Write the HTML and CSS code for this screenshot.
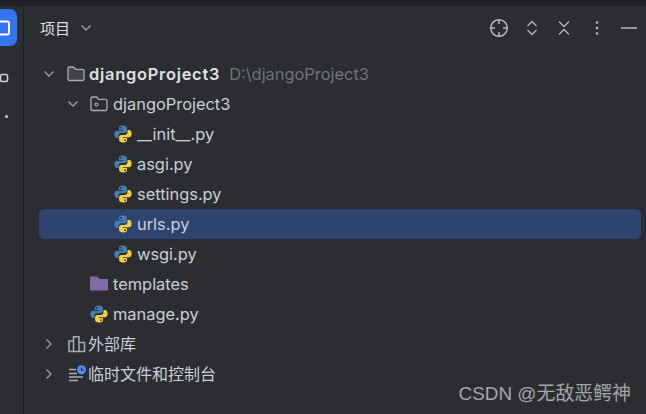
FILE: index.html
```html
<!DOCTYPE html>
<html lang="zh">
<head>
<meta charset="utf-8">
<title>项目</title>
<link rel="stylesheet" href="styles.css">
</head>
<body>
<svg class="defs" width="0" height="0" aria-hidden="true">
  <symbol id="py" viewBox="0 0 18 18">
    <path fill="#3f7fb5" d="M8.8 .5C5.6 .5 5 1.800 5 3v2h4.200v.8H3C1.300 5.800 .4 7.200 .4 9.200s.9 3.700 2.500 3.700H4.500v-2.200c0-1.500 1.300-2.700 2.800-2.700h3.400c1.200 0 2.200-1 2.200-2.200V3C12.900 1.500 11.500 .5 8.800 .5z"/>
    <path fill="#f7cf3d" d="M9.200 17.500c3.200 0 3.800-1.300 3.800-2.500v-2H8.800v-.8H15c1.700 0 2.600-1.400 2.600-3.400s-.9-3.700-2.500-3.700H13.500v2.200c0 1.500-1.300 2.700-2.800 2.700H7.300c-1.200 0-2.200 1-2.200 2.200V15c0 1.500 1.400 2.500 4.100 2.500z"/>
    <circle cx="7" cy="2.800" r=".9" fill="#2b2d30"/>
    <circle cx="11" cy="15.200" r=".9" fill="#2b2d30"/>
  </symbol>
  <symbol id="chev-down" viewBox="0 0 12 12">
    <path d="M1.500 3.500 6 8l4.500-4.500" fill="none" stroke="currentColor" stroke-width="1.300"/>
  </symbol>
  <symbol id="chev-right" viewBox="0 0 12 12">
    <path d="M3.500 1.500 8 6l-4.500 4.500" fill="none" stroke="currentColor" stroke-width="1.300"/>
  </symbol>
</svg>

<div class="topline"></div>
<div class="window">
  <aside class="rail">
    <div class="rail-active"><svg width="18" height="18" viewBox="0 0 18 18"><rect x="2" y="2.500" width="14" height="13" rx="2" fill="none" stroke="#fff" stroke-width="2"/></svg></div>
    <div class="rail-icon"><svg width="10" height="10" viewBox="0 0 10 10"><rect x="1.500" y="1.500" width="7" height="7" rx="1.500" fill="none" stroke="#ced0d6" stroke-width="1.600"/></svg></div>
    <div class="rail-dot"></div>
  </aside>

  <main class="panel">
    <header class="head">
      <div class="title"><span>项目</span><svg class="title-chev" width="12" height="12"><use href="#chev-down"/></svg></div>
      <div class="tools">
        <svg width="20" height="20" viewBox="0 0 20 20" fill="none" stroke="#b4b8bf" stroke-width="1.500"><circle cx="10" cy="10" r="8.300"/><path d="M10 2v4M10 14v4M2 10h4M14 10h4"/></svg>
        <svg class="tool-shift" width="16" height="16" viewBox="0 0 16 16" fill="none" stroke="#b4b8bf" stroke-width="1.300"><path d="M3.500 6 8 1.500 12.500 6M3.500 10 8 14.500 12.500 10"/></svg>
        <svg class="tool-shift" width="16" height="16" viewBox="0 0 16 16" fill="none" stroke="#b4b8bf" stroke-width="1.300"><path d="M3 1.500 8 6.500 13 1.500M3 14.500 8 9.500 13 14.500"/></svg>
        <svg width="16" height="16" viewBox="0 0 16 16" fill="#b4b8bf"><circle cx="8" cy="2.500" r="1.300"/><circle cx="8" cy="8" r="1.300"/><circle cx="8" cy="13.500" r="1.300"/></svg>
        <svg width="16" height="16" viewBox="0 0 16 16"><path d="M0 8h16" stroke="#b4b8bf" stroke-width="1.500"/></svg>
      </div>
    </header>

    <ul class="tree">
      <li class="row lvl0">
        <svg class="arrow" width="12" height="12"><use href="#chev-down"/></svg>
        <svg class="ico" width="18" height="18" viewBox="0 0 18 18"><path d="M1 3.500a1.500 1.500 0 0 1 1.500-1.500h4l2 2.300h7a1.500 1.500 0 0 1 1.500 1.500v8.200a1.500 1.500 0 0 1-1.500 1.500h-13A1.500 1.500 0 0 1 1 14z" fill="#43454a" stroke="#a8adb5" stroke-width="1.300"/></svg>
        <span class="name strong">djangoProject3</span><span class="path">D:\djangoProject3</span>
      </li>
      <li class="row lvl1">
        <svg class="arrow" width="12" height="12"><use href="#chev-down"/></svg>
        <svg class="ico" width="18" height="18" viewBox="0 0 18 18"><path d="M1 3.500a1.500 1.500 0 0 1 1.500-1.500h4l2 2.300h7a1.500 1.500 0 0 1 1.500 1.500v8.200a1.500 1.500 0 0 1-1.500 1.500h-13A1.500 1.500 0 0 1 1 14z" fill="none" stroke="#a8adb5" stroke-width="1.300"/><circle cx="6.500" cy="9.500" r="1.500" fill="none" stroke="#a8adb5" stroke-width="1.200"/></svg>
        <span class="name">djangoProject3</span>
      </li>
      <li class="row lvl2"><svg class="ico" width="18" height="18"><use href="#py"/></svg><span class="name">__init__.py</span></li>
      <li class="row lvl2"><svg class="ico" width="18" height="18"><use href="#py"/></svg><span class="name">asgi.py</span></li>
      <li class="row lvl2"><svg class="ico" width="18" height="18"><use href="#py"/></svg><span class="name">settings.py</span></li>
      <li class="row lvl2 selected"><svg class="ico" width="18" height="18"><use href="#py"/></svg><span class="name">urls.py</span></li>
      <li class="row lvl2"><svg class="ico" width="18" height="18"><use href="#py"/></svg><span class="name">wsgi.py</span></li>
      <li class="row lvl1b">
        <svg class="ico" width="18" height="18" viewBox="0 0 18 18"><path d="M0 1.500h7l2.500 2.500H18v11.500H0z" fill="#8469a8"/></svg>
        <span class="name">templates</span>
      </li>
      <li class="row lvl1b"><svg class="ico" width="18" height="18"><use href="#py"/></svg><span class="name">manage.py</span></li>
      <li class="row lvl0b">
        <svg class="arrow" width="12" height="12"><use href="#chev-right"/></svg>
        <svg class="ico" width="18" height="18" viewBox="0 0 18 18" fill="none" stroke="#a8adb5" stroke-width="1.500"><path d="M1 16.500V6h4.500v10.500zM5.500 16.500V1.800h5.500v14.700zM11 16.500V7.500h5.500v9z"/></svg>
        <span class="name cjk">外部库</span>
      </li>
      <li class="row lvl0b">
        <svg class="arrow" width="12" height="12"><use href="#chev-right"/></svg>
        <svg class="ico" width="18" height="18" viewBox="0 0 18 18"><path d="M1 4.500h7M1 8.500h8M1 12h14M1 15.500h9" stroke="#a8adb5" stroke-width="1.400"/><circle cx="13.500" cy="4.800" r="4.500" fill="#548af7"/><path d="M13.500 2.400v2.800h2.200" fill="none" stroke="#1e1f22" stroke-width="1"/></svg>
        <span class="name cjk">临时文件和控制台</span>
      </li>
    </ul>
  </main>
</div>
<div class="watermark">CSDN @无敌恶鳄神</div>
</body>
</html>
```

FILE: styles.css
```css
* { box-sizing: border-box; }
html, body { margin: 0; height: 100%; }
body {
  width: 646px;
  height: 414px;
  overflow: hidden;
  background: #2b2d30;
  color: #dfe1e5;
  font-family: Inter, "Noto Sans CJK SC", sans-serif;
  font-size: 16.400px;
  display: flex;
  flex-direction: column;
  position: relative;
}
.defs { position: absolute; }
.topline { height: 6px; background: #1e1f22; flex: none; }
.window { flex: 1; display: flex; min-height: 0; }
.rail {
  width: 24px;
  flex: none;
  border-right: 1px solid #1e1f22;
  display: flex;
  flex-direction: column;
  align-items: flex-end;
  padding-top: 3px;
}
.rail-active {
  width: 23px;
  height: 37px;
  margin-right: 6px;
  margin-left: -6px;
  background: #3574f0;
  border-radius: 0 7px 7px 0;
  display: flex;
  align-items: center;
  justify-content: flex-end;
  overflow: hidden;
  flex: none;
}
.rail-active svg { margin-right: 6px; flex: none; }
.rail-icon { align-self: flex-start; margin-top: 27px; margin-left: -1px; height: 10px; }
.rail-icon svg { display: block; }
.rail-dot { align-self: flex-start; width: 3px; height: 3px; border-radius: 50%; background: #ced0d6; margin: 32px 0 0 5px; }
.panel { flex: 1; min-width: 0; display: flex; flex-direction: column; padding: 0 5px 0 15px; }
.head { height: 53px; flex: none; display: flex; align-items: center; justify-content: space-between; padding: 0 6px 10px 1px; margin-right: -1px; }
.title { display: flex; align-items: center; gap: 10px; font-family: "Noto Sans CJK SC", sans-serif; font-size: 15px; }
.title-chev { color: #9da0a8; }
.tools { display: flex; align-items: center; gap: 16px; margin-right: -1px; }
.tools svg { flex: none; display: block; }
.tools .tool-shift { transform: translateX(-1px); }
.tree { list-style: none; margin: 0; padding: 0; }
.row { height: 30px; display: flex; align-items: center; border-radius: 5px; white-space: nowrap; }
.row.selected { background: #2e436e; }
.arrow { color: #9da0a8; flex: none; }
.ico { flex: none; margin-right: 5px; }
.lvl0 { padding-left: 4px; }
.lvl0 .arrow { margin-right: 12px; }
.lvl0 .ico { margin-right: 4px; }
.lvl1 { padding-left: 28px; }
.lvl1 .arrow { margin-right: 11px; }
.lvl2 { padding-left: 75px; }
.lvl1b { padding-left: 51px; }
.lvl0b { padding-left: 4px; }
.lvl0b .arrow { margin-right: 13px; }
.lvl0b .ico { margin-right: 2px; }
.name { color: #c9d0d9; }
.strong { color: #dfe1e5; font-weight: 600; letter-spacing: .75px; }
.path { color: #6f737a; margin-left: 9px; }
.cjk { font-family: "Noto Sans CJK SC", sans-serif; font-size: 16px; line-height: 20px; margin-bottom: 2px; }
.watermark {
  position: absolute;
  right: 15px;
  bottom: 9px;
  color: #a3a5a8;
  font-family: "Liberation Sans", "Noto Sans CJK SC", sans-serif;
  font-size: 18.900px;
}
```
